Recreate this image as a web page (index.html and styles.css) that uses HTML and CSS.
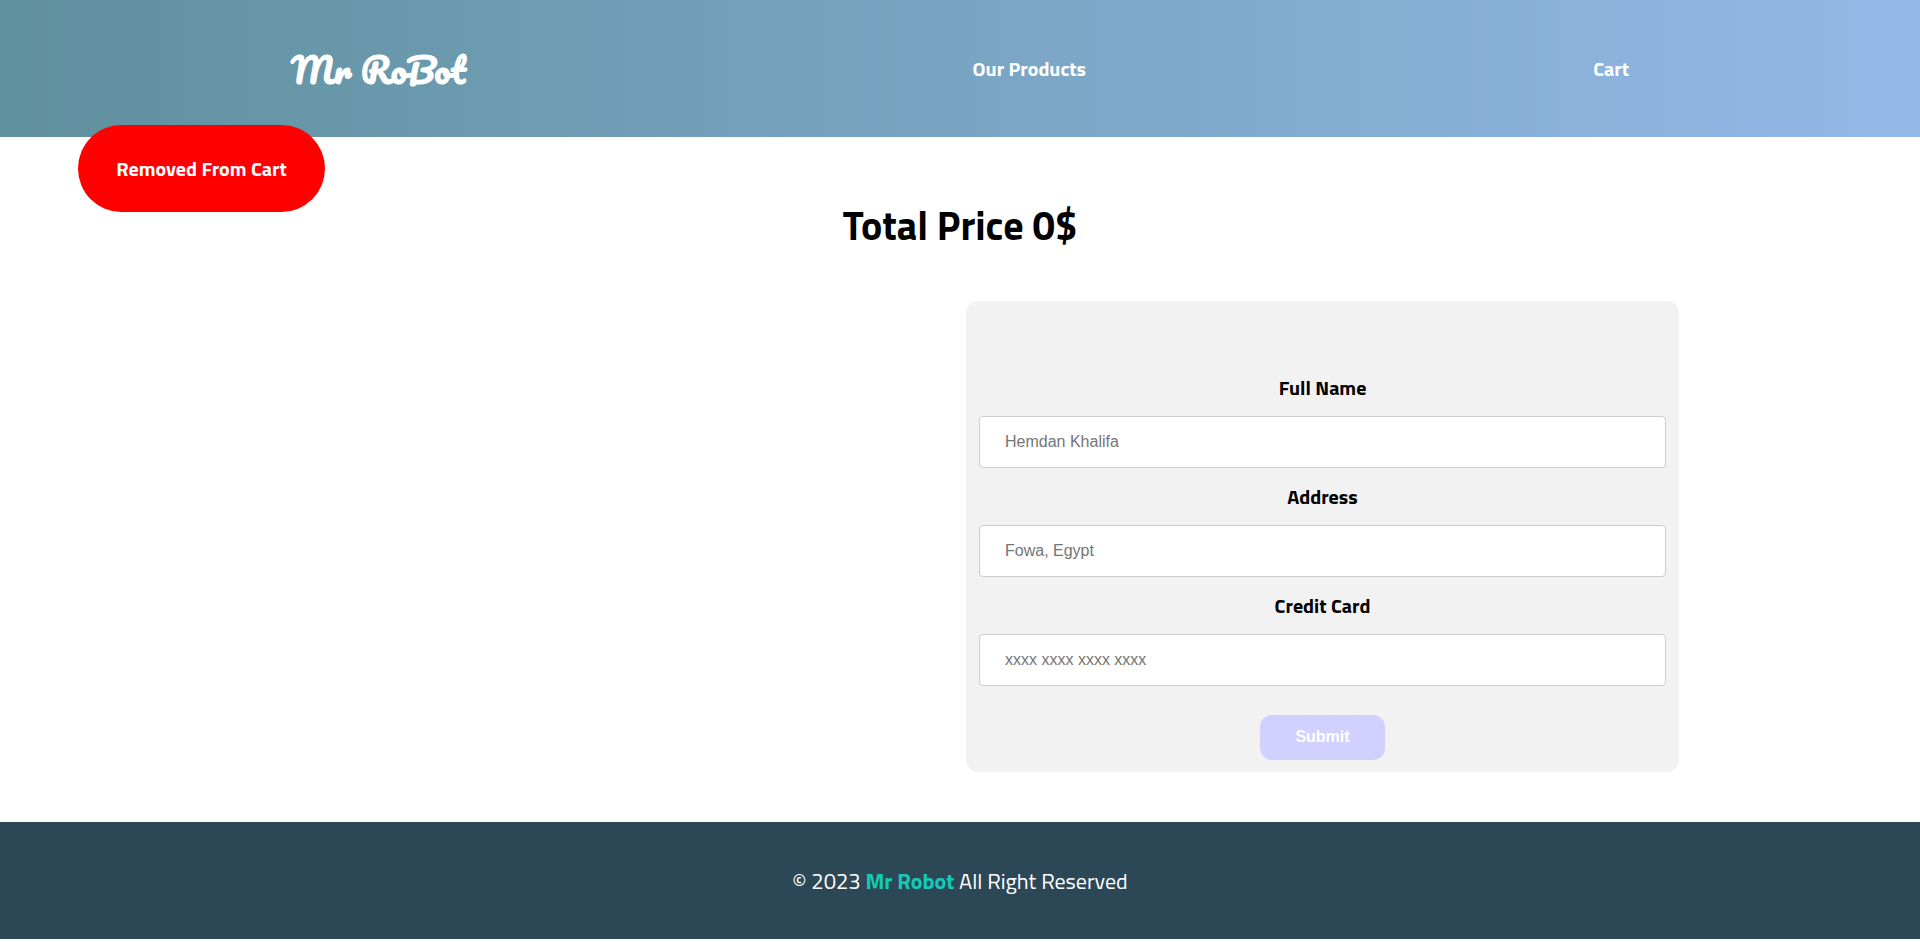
FILE: index.html
```html
<!DOCTYPE html>
<html lang="en">
<head>
<meta charset="utf-8">
<meta name="viewport" content="width=device-width, initial-scale=1">
<title>Mr RoBot - Cart</title>
<link rel="stylesheet" href="styles.css">
</head>
<body>
<header class="header">
  <nav class="nav">
    <a class="logo" href="#">Mr RoBot</a>
    <a class="nav-link" href="#">Our Products</a>
    <a class="nav-link" href="#">Cart</a>
  </nav>
  <div class="toast" role="status">Removed From Cart</div>
</header>
<main class="main">
  <h1 class="total">Total Price 0$</h1>
  <div class="checkout">
    <form class="form">
      <label class="label" for="name">Full Name</label>
      <input class="field" id="name" type="text" placeholder="Hemdan Khalifa">
      <label class="label" for="address">Address</label>
      <input class="field" id="address" type="text" placeholder="Fowa, Egypt">
      <label class="label" for="card">Credit Card</label>
      <input class="field" id="card" type="text" placeholder="xxxx xxxx xxxx xxxx">
      <button class="submit" type="submit" disabled>Submit</button>
    </form>
  </div>
</main>
<footer class="footer">
  <p class="copyright">© 2023 <strong class="brand">Mr Robot</strong> All Right Reserved</p>
</footer>
</body>
</html>
```

FILE: styles.css
```css
* {
  box-sizing: border-box;
}

body {
  margin: 0;
  background: #fff;
  color: #000;
  font-family: "Titillium Web", Roboto, sans-serif;
}

.header {
  position: relative;
  padding: 40px 0;
  background: linear-gradient(to right, #5f909d, #93b9e8);
}

.nav {
  display: flex;
  align-items: center;
  justify-content: space-between;
  width: 70%;
  margin: 0 auto;
  padding: 0 3px;
}

.logo {
  padding-top: 2px;
  color: #fff;
  font-family: Pacifico, "Liberation Serif", serif;
  font-size: 35px;
  font-weight: 700;
  line-height: 55px;
  text-decoration: none;
}

.nav-link {
  color: #fff;
  font-size: 20px;
  font-weight: 700;
  text-decoration: none;
}

.toast {
  position: absolute;
  top: 125px;
  left: 78px;
  min-width: 247px;
  padding: 32px 37px;
  border-radius: 44px;
  background: #f00;
  color: #fff;
  font-size: 20px;
  font-weight: 700;
  line-height: 23px;
  text-align: center;
}

.total {
  margin: 0;
  padding: 59px 0 45px;
  font-size: 40px;
  line-height: 60px;
  text-align: center;
}

.checkout {
  display: flex;
  justify-content: flex-end;
  width: 75%;
  margin: 0 auto;
  padding-right: 1px;
  padding-bottom: 50px;
}

.form {
  display: flex;
  flex-direction: column;
  width: 713px;
  max-width: 100%;
  padding: 58px 13px 12px;
  border-radius: 12px;
  background: #f2f2f2;
}

.label {
  padding: 14px 0 13px;
  font-size: 20px;
  font-weight: 700;
  line-height: 30px;
  text-align: center;
}

.field {
  width: 100%;
  height: 52px;
  padding: 12px 25px;
  border: 1px solid #ccc;
  border-radius: 4px;
  background: #fff;
  font-family: "Liberation Sans", sans-serif;
  font-size: 16px;
}

.field::placeholder {
  color: #757575;
}

.submit {
  align-self: center;
  width: 125px;
  height: 45px;
  margin-top: 29px;
  padding: 0 0 2px;
  border: 0;
  border-radius: 12px;
  background: #d1d1ff;
  color: #fff;
  font-family: "Liberation Sans", sans-serif;
  font-size: 16px;
  font-weight: 700;
}

.footer {
  padding: 41px 0 40px;
  background: #2c4755;
  color: #fff;
  text-align: center;
}

.copyright {
  margin: 0;
  font-size: 22px;
  line-height: 36px;
}

.brand {
  color: #16c9b5;
}
```
